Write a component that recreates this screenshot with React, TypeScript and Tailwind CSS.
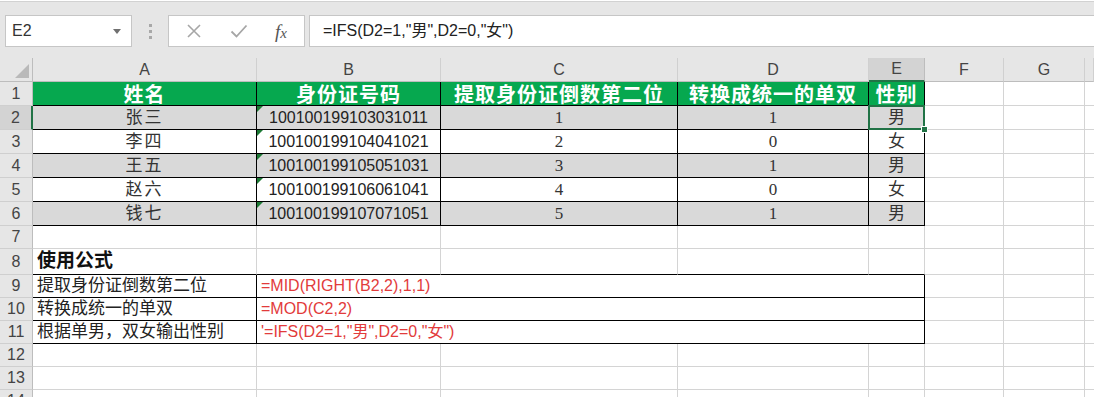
import React from 'react';

const sans = "font-['Liberation_Sans','Noto_Sans_CJK_SC',sans-serif]";
const serif = "font-['Liberation_Serif','Noto_Sans_CJK_SC',serif]";

const letters = ['A', 'B', 'C', 'D', 'E', 'F', 'G', ''];

const people = [
  ['张三', '100100199103031011', '1', '1', '男'],
  ['李四', '100100199104041021', '2', '0', '女'],
  ['王五', '100100199105051031', '3', '1', '男'],
  ['赵六', '100100199106061041', '4', '0', '女'],
  ['钱七', '100100199107071051', '5', '1', '男'],
];

const headers = ['姓名', '身份证号码', '提取身份证倒数第二位', '转换成统一的单双', '性别'];

const formulas = [
  ['提取身份证倒数第二位', '=MID(RIGHT(B2,2),1,1)'],
  ['转换成统一的单双', '=MOD(C2,2)'],
  ['根据单男，双女输出性别', '\'=IFS(D2=1,"男",D2=0,"女")'],
];

const rowHeights: Record<number, string> = {
  1: 'h-[24px]', 2: 'h-[24px]', 3: 'h-[24px]', 4: 'h-[24px]', 5: 'h-[24px]', 6: 'h-[24px]',
  7: 'h-[23px]', 8: 'h-[26px]', 9: 'h-[23px]', 10: 'h-[23px]', 11: 'h-[23px]',
  12: 'h-[23px]', 13: 'h-[23px]', 14: 'h-[23px]',
};

const inRegion = (r: number, c: number) =>
  ((r >= 1 && r <= 6) || (r >= 9 && r <= 11)) && c >= 1 && c <= 5;

function borderCls(r: number, c: number, span = 1) {
  const last = c + span - 1;
  const right = inRegion(r, last) || inRegion(r, last + 1);
  const bottom = inRegion(r, c) || inRegion(r + 1, c);
  if (c === 8) {
    return bottom ? 'border-b border-b-black' : 'border-b border-b-[#d4d4d4]';
  }
  if (right && bottom) return 'border-r border-b border-r-black border-b-black';
  if (right) return 'border-r border-b border-r-black border-b-[#d4d4d4]';
  if (bottom) return 'border-r border-b border-r-[#d4d4d4] border-b-black';
  return 'border-r border-b border-r-[#d4d4d4] border-b-[#d4d4d4]';
}

function Toolbar() {
  return (
    <div className="h-[57px] bg-[#e6e6e6] border-t border-[#d2d2d2] mt-[1px] flex items-start pt-[13px]">
      <div className="ml-[5px] w-[127px] h-[32px] bg-white border border-[#c6c6c6] flex items-center justify-between px-[6px]">
        <span className={`${sans} text-[16px] text-[#333]`}>E2</span>
        <svg width="8" height="5" viewBox="0 0 8 5" className="mr-[4px]">
          <path d="M0 0h8L4 5z" fill="#707070" />
        </svg>
      </div>
      <div className="w-[36px] h-[32px] flex flex-col items-center justify-center gap-[3px]">
        <span className="w-[3px] h-[3px] bg-[#a8a8a8]" />
        <span className="w-[3px] h-[3px] bg-[#a8a8a8]" />
        <span className="w-[3px] h-[3px] bg-[#a8a8a8]" />
      </div>
      <div className="w-[137px] h-[32px] bg-white border border-[#c6c6c6] flex items-center">
        <svg width="16" height="16" viewBox="0 0 16 16" className="ml-[17px]">
          <path d="M2 2L14 14M14 2L2 14" stroke="#a6a6a6" strokeWidth="1.6" fill="none" />
        </svg>
        <svg width="18" height="16" viewBox="0 0 18 16" className="ml-[28px]">
          <path d="M1.5 8.5L6.5 13.5L16.5 2.5" stroke="#a6a6a6" strokeWidth="1.8" fill="none" />
        </svg>
        <span className={`${serif} italic text-[19px] text-[#555] ml-[27px] leading-none`}>
          f<span className="text-[15px]">x</span>
        </span>
      </div>
      <div className="ml-[4px] flex-1 h-[32px] bg-white border border-[#c6c6c6] border-r-0 flex items-center pl-[13px]">
        <span className={`${sans} text-[16px] text-[#222]`}>=IFS(D2=1,"男",D2=0,"女")</span>
      </div>
    </div>
  );
}

function RowHead({ r }: { r: number }) {
  const sel = r === 2;
  return (
    <div
      className={`${rowHeights[r]} ${sans} text-[16px] text-[#444] flex items-center justify-center border-b border-b-[#cfcfcf] ${
        sel ? 'bg-[#d3d3d3] border-r-2 border-r-[#217346]' : 'bg-[#e6e6e6] border-r border-r-[#bdbdbd]'
      }`}
    >
      {r}
    </div>
  );
}

function Cell({
  r,
  c,
  span = 1,
  className = '',
  children,
}: {
  r: number;
  c: number;
  span?: number;
  className?: string;
  children?: React.ReactNode;
}) {
  return (
    <div
      className={`${rowHeights[r]} ${borderCls(r, c, span)} ${
        span === 4 ? 'col-span-4' : ''
      } relative flex items-center min-w-0 whitespace-nowrap ${className}`}
    >
      {children}
    </div>
  );
}

function TextMark() {
  return (
    <span className="absolute left-0 top-0 w-0 h-0 border-t-[6px] border-t-[#1d7a35] border-r-[6px] border-r-transparent" />
  );
}

export default function App() {
  const rows: React.ReactNode[] = [];

  for (let r = 1; r <= 14; r++) {
    rows.push(<RowHead key={`h${r}`} r={r} />);
    if (r === 1) {
      headers.forEach((h, i) =>
        rows.push(
          <Cell
            key={`c${r}-${i}`}
            r={r}
            c={i + 1}
            className="bg-[#06a84f] justify-center text-white font-bold text-[20px] leading-none font-['Noto_Sans_CJK_SC',sans-serif] tracking-[1px]"
          >
            {h}
          </Cell>,
        ),
      );
    } else if (r >= 2 && r <= 6) {
      const p = people[r - 2];
      const shade = r % 2 === 0 ? 'bg-[#d9d9d9]' : 'bg-white';
      rows.push(
        <Cell key={`c${r}-1`} r={r} c={1} className={`${shade} justify-center text-[17px] tracking-[2px] text-[#333] ${serif}`}>
          {p[0]}
        </Cell>,
      );
      rows.push(
        <Cell key={`c${r}-2`} r={r} c={2} className={`${shade} justify-center text-[16px] text-[#222] ${sans}`}>
          <TextMark />
          {p[1]}
        </Cell>,
      );
      rows.push(
        <Cell key={`c${r}-3`} r={r} c={3} className={`${shade} justify-center text-[17px] text-[#333] ${serif}`}>
          {p[2]}
        </Cell>,
      );
      rows.push(
        <Cell key={`c${r}-4`} r={r} c={4} className={`${shade} justify-center text-[17px] text-[#333] ${serif}`}>
          {p[3]}
        </Cell>,
      );
      rows.push(
        <Cell key={`c${r}-5`} r={r} c={5} className={`${shade} justify-center text-[17px] text-[#333] ${serif}`}>
          {p[4]}
          {r === 2 && (
            <>
              <span className="absolute -left-[1px] -top-[1px] right-[-1px] bottom-[-1px] border-2 border-[#217346] z-10" />
              <span className="absolute -right-[4px] -bottom-[4px] w-[7px] h-[7px] bg-[#217346] border border-white z-20" />
            </>
          )}
        </Cell>,
      );
    } else if (r >= 9 && r <= 11) {
      const f = formulas[r - 9];
      rows.push(
        <Cell key={`c${r}-1`} r={r} c={1} className={`pl-[4px] text-[17px] text-[#222] ${sans}`}>
          {f[0]}
        </Cell>,
      );
      rows.push(
        <Cell key={`c${r}-2`} r={r} c={2} span={4} className={`pl-[4px] text-[16px] text-[#e23b3b] ${sans}`}>
          {f[1]}
        </Cell>,
      );
    } else {
      for (let c = 1; c <= 5; c++) {
        rows.push(
          <Cell key={`c${r}-${c}`} r={r} c={c} className={`pl-[4px] ${sans}`}>
            {r === 8 && c === 1 ? <span className="font-bold text-[19px] text-[#111]">使用公式</span> : null}
          </Cell>,
        );
      }
    }
    for (let c = 6; c <= 8; c++) {
      rows.push(<Cell key={`c${r}-${c}`} r={r} c={c} />);
    }
  }

  return (
    <div className="w-[1094px] h-[397px] overflow-hidden bg-white">
      <Toolbar />
      <div className="grid grid-cols-[33px_224px_184px_237px_191px_56px_79px_81px_1fr]">
        <div className="h-[24px] bg-[#e6e6e6] border-r border-b border-r-[#bdbdbd] border-b-[#bdbdbd] flex items-end justify-end pr-[3px] pb-[3px]">
          <svg width="14" height="14" viewBox="0 0 14 14">
            <path d="M14 0V14H0z" fill="#b9b9b9" />
          </svg>
        </div>
        {letters.map((l, i) => (
          <div
            key={l + i}
            className={`h-[24px] ${sans} text-[16px] text-[#444] flex items-center justify-center ${
              l === 'E'
                ? 'bg-[#d3d3d3] border-r border-b-2 border-r-[#bdbdbd] border-b-[#217346]'
                : 'bg-[#e6e6e6] border-r border-b border-r-[#d0d0d0] border-b-[#bdbdbd]'
            }`}
          >
            {l}
          </div>
        ))}
        {rows}
      </div>
    </div>
  );
}
